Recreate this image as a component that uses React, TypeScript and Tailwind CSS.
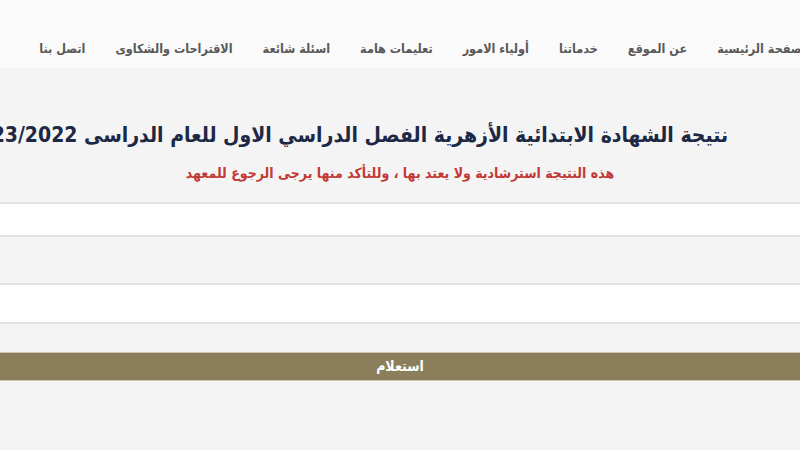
const navItems = [
  'الصفحة الرئيسية',
  'عن الموقع',
  'خدماتنا',
  'أولياء الامور',
  'تعليمات هامة',
  'اسئلة شائعة',
  'الاقتراحات والشكاوى',
  'اتصل بنا',
];

const App = () => {
  return (
    <div
      dir="rtl"
      className="h-[450px] w-[800px] overflow-hidden bg-[#f4f4f4] font-['DejaVu_Sans_Condensed','DejaVu_Sans',sans-serif]"
    >
      {/* Top navigation */}
      <nav className="flex h-[68px] items-end bg-[#fafafa] pb-[9px]">
        <ul className="-mr-[10px] flex gap-[30px] whitespace-nowrap text-[12.5px] font-bold text-[#585858]">
          {navItems.map((item) => (
            <li key={item}>{item}</li>
          ))}
        </ul>
      </nav>

      {/* Heading */}
      <div className="pt-[51px]">
        <h1 className="whitespace-nowrap pr-[72px] text-[21px] font-bold leading-[32px] text-[#1d2845]">
          نتيجة الشهادة الابتدائية الأزهرية الفصل الدراسي الاول للعام الدراسى 2023/2022
        </h1>
        <p className="mt-[12px] whitespace-nowrap text-center text-[14px] font-bold leading-[20px] text-[#c23a35]">
          هذه النتيجة استرشادية ولا يعتد بها ، وللتأكد منها يرجى الرجوع للمعهد
        </p>
      </div>

      {/* Form */}
      <form className="mt-[19px] flex flex-col">
        <input
          type="text"
          className="h-[35px] w-full border-y-2 border-[#e2e2e2] bg-white outline-none"
        />
        <div className="h-[46px]" />
        <input
          type="text"
          className="h-[41px] w-full border-y-2 border-[#e2e2e2] bg-white outline-none"
        />
        <div className="h-[28px]" />
        <button
          type="button"
          className="h-[29px] w-full border-y border-[#cfc6ad] bg-[#8b7f5b] text-[14px] font-bold text-white"
        >
          استعلام
        </button>
      </form>
    </div>
  );
};

export default App;
